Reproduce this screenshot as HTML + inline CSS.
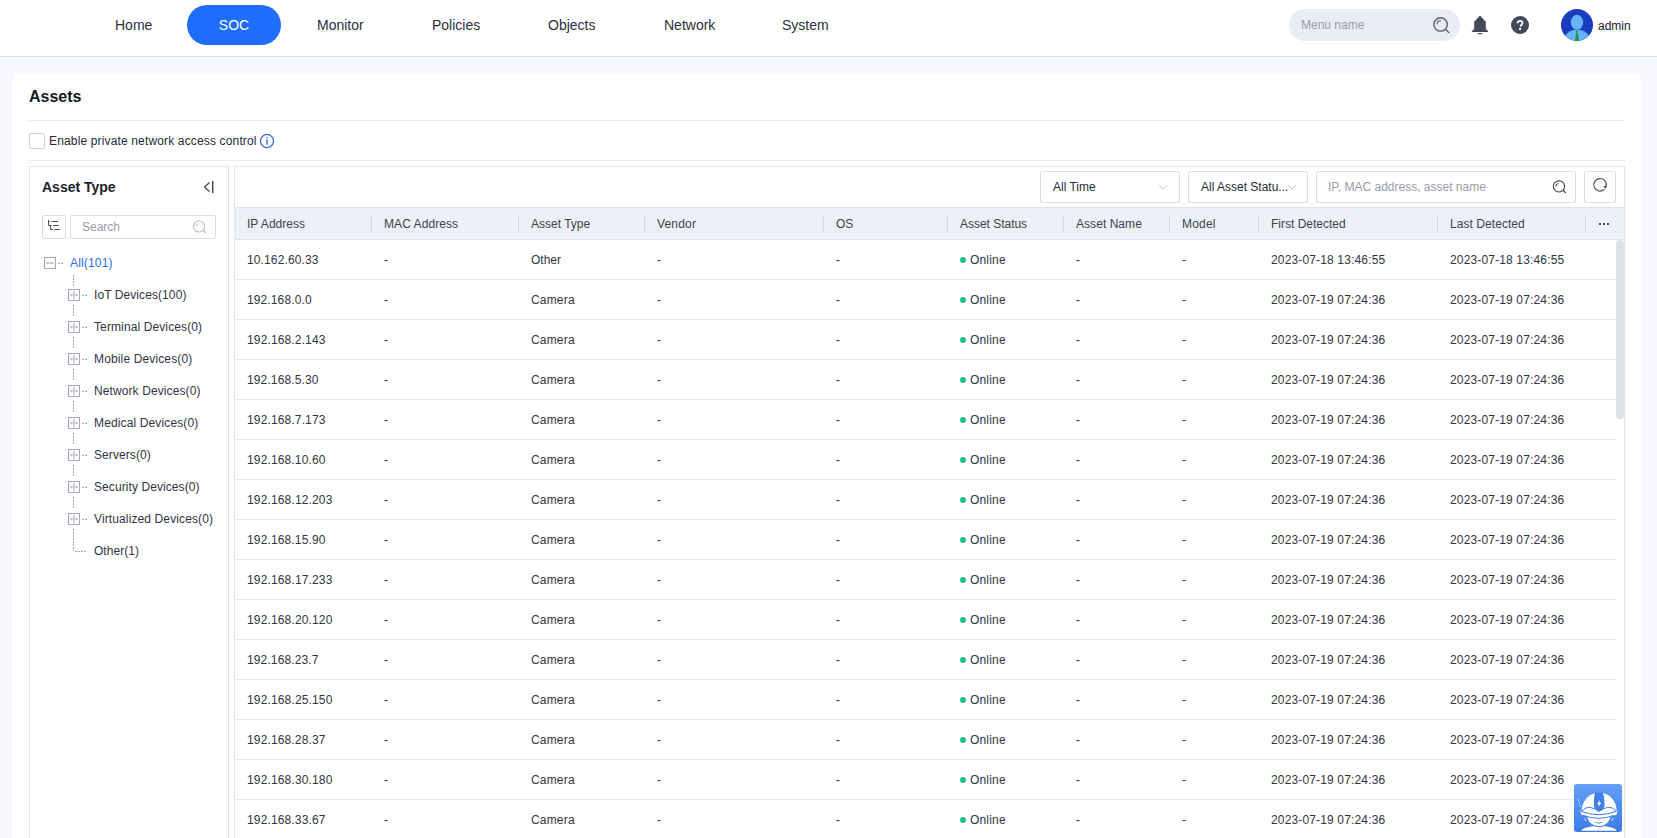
<!DOCTYPE html>
<html><head><meta charset="utf-8">
<style>
*{box-sizing:border-box;margin:0;padding:0}
html,body{width:1657px;height:838px;overflow:hidden}
body{background:#f7f8fc;font-family:"Liberation Sans",sans-serif;color:#1f2430;position:relative}
.abs{position:absolute}
#nav{position:absolute;left:0;top:0;width:1657px;height:57px;background:#fff;border-bottom:1px solid #dde1e8}
.ni{position:absolute;top:0;height:50px;line-height:50px;font-size:14px;color:#2b303b;white-space:nowrap}
#soc{position:absolute;left:187px;top:5px;width:94px;height:40px;border-radius:20px;background:#1f6dfd;color:#fff;font-size:14px;line-height:40px;text-align:center}
#msearch{position:absolute;left:1289px;top:9px;width:171px;height:32px;border-radius:16px;background:#e9ecf3}
#msearch span{position:absolute;left:12px;top:0;line-height:32px;font-size:12px;color:#979ca8}
#card{position:absolute;left:13px;top:73px;width:1628px;height:800px;background:#fff;border-radius:4px}
.hl{position:absolute;height:1px;background:#e8ebf0}
.txt{position:absolute;white-space:nowrap;font-size:12px;line-height:14px}
#lp{position:absolute;left:29px;top:166px;width:200px;height:700px;border:1px solid #dfe3ea;border-bottom:none}
#rp{position:absolute;left:234px;top:166px;width:1391px;height:700px;border:1px solid #dfe3ea;border-bottom:none}
.sel{position:absolute;top:171px;height:32px;border:1px solid #d9dde5;border-radius:2px;background:#fff;font-size:12px;line-height:30px;white-space:nowrap}
#thead{position:absolute;left:235px;top:207px;width:1389px;height:33px;background:#edf0f7;border-top:1px solid #dfe3ea;border-bottom:1px solid #dfe3ea}
.th{position:absolute;top:1px;line-height:31px;font-size:12px;color:#3d434e;white-space:nowrap}
.sep{position:absolute;top:8px;width:1px;height:16px;background:#d3d8e2}
.more{position:absolute;left:1364px;top:15px;width:12px;height:3px}
.more i{float:left;width:2px;height:2px;background:#4a505c;margin-right:2px}
.row{position:absolute;left:235px;width:1381px;height:40px;border-bottom:1px solid #e4e7ed}
.td{position:absolute;top:0;line-height:41px;font-size:12px;color:#30353f;white-space:nowrap}
.dot{display:inline-block;width:6px;height:6px;border-radius:3px;background:#1fc083;margin-right:4px;vertical-align:1px}
.tn{position:absolute;white-space:nowrap;font-size:12px;color:#30353f;line-height:14px}
.pb{position:absolute;width:12px;height:12px;border:1px solid #a2a8b3;background:#fff}
.pb:before{content:"";position:absolute;left:1px;top:4px;width:8px;height:2px;background:#c9cdd5}
.pb.plus:after{content:"";position:absolute;left:4px;top:1px;width:2px;height:8px;background:#c9cdd5}
.vd{position:absolute;width:1px;background:repeating-linear-gradient(to bottom,#a3a9b4 0 2px,transparent 2px 3px)}
.hd{position:absolute;height:1px;background:repeating-linear-gradient(to right,#a3a9b4 0 2px,transparent 2px 3px)}
#sb{position:absolute;left:1616px;top:240px;width:8px;height:179px;background:#dfe2ea;border-radius:4px}
</style></head><body>
<div id="nav">
  <div class="ni" style="left:115px">Home</div>
  <div id="soc">SOC</div>
  <div class="ni" style="left:317px">Monitor</div>
  <div class="ni" style="left:432px">Policies</div>
  <div class="ni" style="left:548px">Objects</div>
  <div class="ni" style="left:664px">Network</div>
  <div class="ni" style="left:782px">System</div>
  <div id="msearch"><span>Menu name</span>
    <svg class="abs" style="left:143px;top:7px" width="19" height="19" viewBox="0 0 19 19"><circle cx="8.6" cy="8.4" r="6.7" fill="none" stroke="#5c6270" stroke-width="1.4"/><path d="M13.4 13.2L17.3 16.9" stroke="#5c6270" stroke-width="1.4"/><path d="M4.9 8.4A4 4 0 0 1 8.8 4.7" fill="none" stroke="#5c6270" stroke-width="1.2"/></svg>
  </div>
  <svg class="abs" style="left:1471px;top:15px" width="18" height="20" viewBox="0 0 18 20"><path d="M9 0.6L3.2 6.8V14L0.8 16.2V17H17.2V16.2L14.8 14V6.8Z" fill="#434959"/><rect x="7" y="18" width="4" height="1.2" fill="#434959"/></svg>
  <svg class="abs" style="left:1511px;top:16px" width="18" height="18" viewBox="0 0 18 18"><circle cx="9" cy="9" r="9" fill="#434959"/><path d="M6.6 7.2C6.6 5.7 7.7 4.8 9.1 4.8C10.5 4.8 11.5 5.7 11.5 6.9C11.5 8.4 9.7 8.6 9.7 10.2V10.8" fill="none" stroke="#fff" stroke-width="1.8"/><rect x="8.1" y="12" width="2" height="2" fill="#fff"/></svg>
  <svg class="abs" style="left:1561px;top:9px" width="32" height="32" viewBox="0 0 32 32"><defs><clipPath id="av"><circle cx="16" cy="16" r="16"/></clipPath></defs><circle cx="16" cy="16" r="16" fill="#1a3dbd"/><g clip-path="url(#av)"><ellipse cx="16" cy="32.5" rx="13.5" ry="12" fill="#66b2fd"/><ellipse cx="16" cy="13.2" rx="6.2" ry="7.4" fill="#66b2fd"/><path d="M15.2 23.8H16.8L18 32H14Z" fill="#14a03a"/><ellipse cx="16" cy="22.6" rx="1.2" ry="1.1" fill="#14a03a"/></g></svg>
  <div class="abs" style="left:1598px;top:19px;font-size:12px;line-height:14px;color:#1a1a1a">admin</div>
</div>
<div id="card"></div>
<div class="txt" style="left:29px;top:88px;font-size:16px;line-height:18px;font-weight:bold;color:#14181f">Assets</div>
<div class="hl" style="left:29px;top:120px;width:1596px"></div>
<div class="abs" style="left:29px;top:133px;width:16px;height:16px;border:1px solid #cdd2da;border-radius:2px"></div>
<div class="txt" style="left:49px;top:134px;color:#262b36;letter-spacing:0.15px">Enable private network access control</div>
<svg class="abs" style="left:260px;top:134px" width="14" height="14" viewBox="0 0 14 14"><circle cx="7" cy="7" r="6.5" fill="none" stroke="#2055e5" stroke-width="1.05"/><rect x="6.1" y="3" width="1.8" height="1.2" fill="#6f90ee"/><rect x="6.1" y="5.2" width="1.8" height="5.6" fill="#6f90ee"/></svg>
<div class="hl" style="left:29px;top:160px;width:1596px"></div>
<div id="lp"></div>
<div class="abs" style="left:42px;top:179px;font-size:14px;line-height:16px;font-weight:bold;color:#1a1e27">Asset Type</div>
<svg class="abs" style="left:202px;top:180px" width="12" height="14" viewBox="0 0 12 14"><path d="M7.5 2.5L2.5 7L7.5 11.5" fill="none" stroke="#3c424e" stroke-width="1.2"/><rect x="10" y="1" width="1.4" height="12" fill="#3c424e"/></svg>
<div class="abs" style="left:42px;top:215px;width:24px;height:24px;border:1px solid #d9dde5;border-radius:2px"></div>
<svg class="abs" style="left:47px;top:220px" width="14" height="14" viewBox="0 0 14 14"><path d="M1.5 0V5.5H4.8M1.5 1.5H2.8M3.5 5.5V9.5H5.7M4.3 1.5H10.9M6.2 5.5H11.8M7.1 9.5H12.9" fill="none" stroke="#4a505c" stroke-width="1"/></svg>
<div class="abs" style="left:70px;top:215px;width:146px;height:24px;border:1px solid #d9dde5;border-radius:2px"></div>
<div class="txt" style="left:82px;top:220px;color:#979ca8">Search</div>
<svg class="abs" style="left:192px;top:219px" width="16" height="16" viewBox="0 0 16 16"><circle cx="7.1" cy="7.4" r="5.6" fill="none" stroke="#b8bdc6" stroke-width="1.1"/><path d="M11.1 11.3L14 14" stroke="#b8bdc6" stroke-width="1.1"/><path d="M3.7 7.6A3.4 3.4 0 0 1 6.9 4.6" fill="none" stroke="#b8bdc6" stroke-width="1"/></svg>
<div class="pb" style="left:44px;top:257px"></div>
<div class="hd" style="left:58px;top:263px;width:5px"></div>
<div class="tn" style="left:70px;top:256px;color:#2a6df4;letter-spacing:0.165px">All(101)</div>
<div class="vd" style="left:73px;top:275px;height:12px"></div>
<div class="pb plus" style="left:68px;top:289px"></div>
<div class="hd" style="left:82px;top:295px;width:5px"></div>
<div class="tn" style="left:94px;top:288px;letter-spacing:0.082px">IoT Devices(100)</div>
<div class="vd" style="left:73px;top:305px;height:12px"></div>
<div class="pb plus" style="left:68px;top:321px"></div>
<div class="hd" style="left:82px;top:327px;width:5px"></div>
<div class="tn" style="left:94px;top:320px;letter-spacing:0.111px">Terminal Devices(0)</div>
<div class="vd" style="left:73px;top:337px;height:12px"></div>
<div class="pb plus" style="left:68px;top:353px"></div>
<div class="hd" style="left:82px;top:359px;width:5px"></div>
<div class="tn" style="left:94px;top:352px;letter-spacing:0.14px">Mobile Devices(0)</div>
<div class="vd" style="left:73px;top:369px;height:12px"></div>
<div class="pb plus" style="left:68px;top:385px"></div>
<div class="hd" style="left:82px;top:391px;width:5px"></div>
<div class="tn" style="left:94px;top:384px;letter-spacing:0.102px">Network Devices(0)</div>
<div class="vd" style="left:73px;top:401px;height:12px"></div>
<div class="pb plus" style="left:68px;top:417px"></div>
<div class="hd" style="left:82px;top:423px;width:5px"></div>
<div class="tn" style="left:94px;top:416px;letter-spacing:0.132px">Medical Devices(0)</div>
<div class="vd" style="left:73px;top:433px;height:12px"></div>
<div class="pb plus" style="left:68px;top:449px"></div>
<div class="hd" style="left:82px;top:455px;width:5px"></div>
<div class="tn" style="left:94px;top:448px;letter-spacing:0.079px">Servers(0)</div>
<div class="vd" style="left:73px;top:465px;height:12px"></div>
<div class="pb plus" style="left:68px;top:481px"></div>
<div class="hd" style="left:82px;top:487px;width:5px"></div>
<div class="tn" style="left:94px;top:480px;letter-spacing:0.083px">Security Devices(0)</div>
<div class="vd" style="left:73px;top:497px;height:12px"></div>
<div class="pb plus" style="left:68px;top:513px"></div>
<div class="hd" style="left:82px;top:519px;width:5px"></div>
<div class="tn" style="left:94px;top:512px;letter-spacing:0.12px">Virtualized Devices(0)</div>
<div class="vd" style="left:73px;top:529px;height:22px"></div>
<div class="hd" style="left:75px;top:551px;width:11px"></div>
<div class="tn" style="left:94px;top:544px;letter-spacing:0.032px">Other(1)</div>
<div id="rp"></div>
<div class="sel" style="left:1040px;width:140px;padding-left:12px;color:#262b36">All Time</div>
<svg class="abs" style="left:1158px;top:184px" width="10" height="7" viewBox="0 0 10 7"><path d="M1 1.2L5 5.2L9 1.2" fill="none" stroke="#bcc1c9" stroke-width="1"/></svg>
<div class="sel" style="left:1188px;width:120px;padding-left:12px;color:#262b36">All Asset Statu...</div>
<svg class="abs" style="left:1287px;top:184px" width="10" height="7" viewBox="0 0 10 7"><path d="M1 1.2L5 5.2L9 1.2" fill="none" stroke="#bcc1c9" stroke-width="1"/></svg>
<div class="sel" style="left:1316px;width:260px;padding-left:11px;color:#979ca8">IP, MAC address, asset name</div>
<svg class="abs" style="left:1551px;top:179px" width="17" height="17" viewBox="0 0 17 17"><circle cx="8" cy="7.4" r="5.6" fill="none" stroke="#444a57" stroke-width="1.2"/><path d="M11.9 11.3L14.9 14" stroke="#444a57" stroke-width="1.2"/><path d="M4.7 7.4A3.5 3.5 0 0 1 7.6 4.5" fill="none" stroke="#444a57" stroke-width="1.1"/></svg>
<div class="sel" style="left:1584px;width:32px"></div>
<svg class="abs" style="left:1591px;top:176px" width="18" height="18" viewBox="0 0 18 18"><path d="M13.3 13.5A6.3 6.3 0 1 1 15.2 10.3" fill="none" stroke="#4a5160" stroke-width="1.2"/><path d="M12.2 10.2L16.2 9.4L14.6 13Z" fill="#4a5160"/></svg>
<div id="thead"><div class="th" style="left:12px;letter-spacing:0.025px">IP Address</div><div class="th" style="left:149px;letter-spacing:0.071px">MAC Address</div><div class="th" style="left:296px">Asset Type</div><div class="th" style="left:422px;letter-spacing:0.174px">Vendor</div><div class="th" style="left:601px;letter-spacing:-0.135px">OS</div><div class="th" style="left:725px;letter-spacing:-0.024px">Asset Status</div><div class="th" style="left:841px;letter-spacing:0.051px">Asset Name</div><div class="th" style="left:947px;letter-spacing:0.21px">Model</div><div class="th" style="left:1036px">First Detected</div><div class="th" style="left:1215px;letter-spacing:0.058px">Last Detected</div><div class="sep" style="left:136px"></div><div class="sep" style="left:283px"></div><div class="sep" style="left:409px"></div><div class="sep" style="left:588px"></div><div class="sep" style="left:712px"></div><div class="sep" style="left:828px"></div><div class="sep" style="left:934px"></div><div class="sep" style="left:1023px"></div><div class="sep" style="left:1202px"></div><div class="sep" style="left:1350px"></div><div class="more"><i></i><i></i><i></i></div></div>
<div class="row" style="top:240px"><div class="td" style="left:12px;letter-spacing:0.129px">10.162.60.33</div><div class="td" style="left:149px">-</div><div class="td" style="left:296px">Other</div><div class="td" style="left:422px">-</div><div class="td" style="left:601px">-</div><div class="td" style="left:725px;letter-spacing:0.175px"><span class="dot"></span>Online</div><div class="td" style="left:841px">-</div><div class="td" style="left:947px">-</div><div class="td" style="left:1036px;letter-spacing:0.15px">2023-07-18 13:46:55</div><div class="td" style="left:1215px;letter-spacing:0.15px">2023-07-18 13:46:55</div></div>
<div class="row" style="top:280px"><div class="td" style="left:12px;letter-spacing:0.117px">192.168.0.0</div><div class="td" style="left:149px">-</div><div class="td" style="left:296px;letter-spacing:0.176px">Camera</div><div class="td" style="left:422px">-</div><div class="td" style="left:601px">-</div><div class="td" style="left:725px;letter-spacing:0.175px"><span class="dot"></span>Online</div><div class="td" style="left:841px">-</div><div class="td" style="left:947px">-</div><div class="td" style="left:1036px;letter-spacing:0.15px">2023-07-19 07:24:36</div><div class="td" style="left:1215px;letter-spacing:0.15px">2023-07-19 07:24:36</div></div>
<div class="row" style="top:320px"><div class="td" style="left:12px;letter-spacing:0.139px">192.168.2.143</div><div class="td" style="left:149px">-</div><div class="td" style="left:296px;letter-spacing:0.176px">Camera</div><div class="td" style="left:422px">-</div><div class="td" style="left:601px">-</div><div class="td" style="left:725px;letter-spacing:0.175px"><span class="dot"></span>Online</div><div class="td" style="left:841px">-</div><div class="td" style="left:947px">-</div><div class="td" style="left:1036px;letter-spacing:0.15px">2023-07-19 07:24:36</div><div class="td" style="left:1215px;letter-spacing:0.15px">2023-07-19 07:24:36</div></div>
<div class="row" style="top:360px"><div class="td" style="left:12px;letter-spacing:0.129px">192.168.5.30</div><div class="td" style="left:149px">-</div><div class="td" style="left:296px;letter-spacing:0.176px">Camera</div><div class="td" style="left:422px">-</div><div class="td" style="left:601px">-</div><div class="td" style="left:725px;letter-spacing:0.175px"><span class="dot"></span>Online</div><div class="td" style="left:841px">-</div><div class="td" style="left:947px">-</div><div class="td" style="left:1036px;letter-spacing:0.15px">2023-07-19 07:24:36</div><div class="td" style="left:1215px;letter-spacing:0.15px">2023-07-19 07:24:36</div></div>
<div class="row" style="top:400px"><div class="td" style="left:12px;letter-spacing:0.139px">192.168.7.173</div><div class="td" style="left:149px">-</div><div class="td" style="left:296px;letter-spacing:0.176px">Camera</div><div class="td" style="left:422px">-</div><div class="td" style="left:601px">-</div><div class="td" style="left:725px;letter-spacing:0.175px"><span class="dot"></span>Online</div><div class="td" style="left:841px">-</div><div class="td" style="left:947px">-</div><div class="td" style="left:1036px;letter-spacing:0.15px">2023-07-19 07:24:36</div><div class="td" style="left:1215px;letter-spacing:0.15px">2023-07-19 07:24:36</div></div>
<div class="row" style="top:440px"><div class="td" style="left:12px;letter-spacing:0.139px">192.168.10.60</div><div class="td" style="left:149px">-</div><div class="td" style="left:296px;letter-spacing:0.176px">Camera</div><div class="td" style="left:422px">-</div><div class="td" style="left:601px">-</div><div class="td" style="left:725px;letter-spacing:0.175px"><span class="dot"></span>Online</div><div class="td" style="left:841px">-</div><div class="td" style="left:947px">-</div><div class="td" style="left:1036px;letter-spacing:0.15px">2023-07-19 07:24:36</div><div class="td" style="left:1215px;letter-spacing:0.15px">2023-07-19 07:24:36</div></div>
<div class="row" style="top:480px"><div class="td" style="left:12px;letter-spacing:0.148px">192.168.12.203</div><div class="td" style="left:149px">-</div><div class="td" style="left:296px;letter-spacing:0.176px">Camera</div><div class="td" style="left:422px">-</div><div class="td" style="left:601px">-</div><div class="td" style="left:725px;letter-spacing:0.175px"><span class="dot"></span>Online</div><div class="td" style="left:841px">-</div><div class="td" style="left:947px">-</div><div class="td" style="left:1036px;letter-spacing:0.15px">2023-07-19 07:24:36</div><div class="td" style="left:1215px;letter-spacing:0.15px">2023-07-19 07:24:36</div></div>
<div class="row" style="top:520px"><div class="td" style="left:12px;letter-spacing:0.139px">192.168.15.90</div><div class="td" style="left:149px">-</div><div class="td" style="left:296px;letter-spacing:0.176px">Camera</div><div class="td" style="left:422px">-</div><div class="td" style="left:601px">-</div><div class="td" style="left:725px;letter-spacing:0.175px"><span class="dot"></span>Online</div><div class="td" style="left:841px">-</div><div class="td" style="left:947px">-</div><div class="td" style="left:1036px;letter-spacing:0.15px">2023-07-19 07:24:36</div><div class="td" style="left:1215px;letter-spacing:0.15px">2023-07-19 07:24:36</div></div>
<div class="row" style="top:560px"><div class="td" style="left:12px;letter-spacing:0.148px">192.168.17.233</div><div class="td" style="left:149px">-</div><div class="td" style="left:296px;letter-spacing:0.176px">Camera</div><div class="td" style="left:422px">-</div><div class="td" style="left:601px">-</div><div class="td" style="left:725px;letter-spacing:0.175px"><span class="dot"></span>Online</div><div class="td" style="left:841px">-</div><div class="td" style="left:947px">-</div><div class="td" style="left:1036px;letter-spacing:0.15px">2023-07-19 07:24:36</div><div class="td" style="left:1215px;letter-spacing:0.15px">2023-07-19 07:24:36</div></div>
<div class="row" style="top:600px"><div class="td" style="left:12px;letter-spacing:0.148px">192.168.20.120</div><div class="td" style="left:149px">-</div><div class="td" style="left:296px;letter-spacing:0.176px">Camera</div><div class="td" style="left:422px">-</div><div class="td" style="left:601px">-</div><div class="td" style="left:725px;letter-spacing:0.175px"><span class="dot"></span>Online</div><div class="td" style="left:841px">-</div><div class="td" style="left:947px">-</div><div class="td" style="left:1036px;letter-spacing:0.15px">2023-07-19 07:24:36</div><div class="td" style="left:1215px;letter-spacing:0.15px">2023-07-19 07:24:36</div></div>
<div class="row" style="top:640px"><div class="td" style="left:12px;letter-spacing:0.129px">192.168.23.7</div><div class="td" style="left:149px">-</div><div class="td" style="left:296px;letter-spacing:0.176px">Camera</div><div class="td" style="left:422px">-</div><div class="td" style="left:601px">-</div><div class="td" style="left:725px;letter-spacing:0.175px"><span class="dot"></span>Online</div><div class="td" style="left:841px">-</div><div class="td" style="left:947px">-</div><div class="td" style="left:1036px;letter-spacing:0.15px">2023-07-19 07:24:36</div><div class="td" style="left:1215px;letter-spacing:0.15px">2023-07-19 07:24:36</div></div>
<div class="row" style="top:680px"><div class="td" style="left:12px;letter-spacing:0.148px">192.168.25.150</div><div class="td" style="left:149px">-</div><div class="td" style="left:296px;letter-spacing:0.176px">Camera</div><div class="td" style="left:422px">-</div><div class="td" style="left:601px">-</div><div class="td" style="left:725px;letter-spacing:0.175px"><span class="dot"></span>Online</div><div class="td" style="left:841px">-</div><div class="td" style="left:947px">-</div><div class="td" style="left:1036px;letter-spacing:0.15px">2023-07-19 07:24:36</div><div class="td" style="left:1215px;letter-spacing:0.15px">2023-07-19 07:24:36</div></div>
<div class="row" style="top:720px"><div class="td" style="left:12px;letter-spacing:0.139px">192.168.28.37</div><div class="td" style="left:149px">-</div><div class="td" style="left:296px;letter-spacing:0.176px">Camera</div><div class="td" style="left:422px">-</div><div class="td" style="left:601px">-</div><div class="td" style="left:725px;letter-spacing:0.175px"><span class="dot"></span>Online</div><div class="td" style="left:841px">-</div><div class="td" style="left:947px">-</div><div class="td" style="left:1036px;letter-spacing:0.15px">2023-07-19 07:24:36</div><div class="td" style="left:1215px;letter-spacing:0.15px">2023-07-19 07:24:36</div></div>
<div class="row" style="top:760px"><div class="td" style="left:12px;letter-spacing:0.148px">192.168.30.180</div><div class="td" style="left:149px">-</div><div class="td" style="left:296px;letter-spacing:0.176px">Camera</div><div class="td" style="left:422px">-</div><div class="td" style="left:601px">-</div><div class="td" style="left:725px;letter-spacing:0.175px"><span class="dot"></span>Online</div><div class="td" style="left:841px">-</div><div class="td" style="left:947px">-</div><div class="td" style="left:1036px;letter-spacing:0.15px">2023-07-19 07:24:36</div><div class="td" style="left:1215px;letter-spacing:0.15px">2023-07-19 07:24:36</div></div>
<div class="row" style="top:800px"><div class="td" style="left:12px;letter-spacing:0.139px">192.168.33.67</div><div class="td" style="left:149px">-</div><div class="td" style="left:296px;letter-spacing:0.176px">Camera</div><div class="td" style="left:422px">-</div><div class="td" style="left:601px">-</div><div class="td" style="left:725px;letter-spacing:0.175px"><span class="dot"></span>Online</div><div class="td" style="left:841px">-</div><div class="td" style="left:947px">-</div><div class="td" style="left:1036px;letter-spacing:0.15px">2023-07-19 07:24:36</div><div class="td" style="left:1215px;letter-spacing:0.15px">2023-07-19 07:24:36</div></div>
<div id="sb"></div>
<div class="abs" style="left:1574px;top:784px;width:48px;height:48px;border-radius:3px;background:linear-gradient(#62a0f7,#3b7be7);overflow:hidden">
<svg class="abs" style="left:0;top:0" width="48" height="48" viewBox="0 0 48 48"><defs><clipPath id="dc"><rect x="0" y="0" width="48" height="29"/></clipPath></defs><path d="M7.5 46.8A17.5 4.8 0 0 1 42.5 46.8Z" fill="#fff"/><circle cx="24.8" cy="30.4" r="12.4" fill="#fff" stroke="#3e7fe9" stroke-width="1"/><circle cx="25.2" cy="26" r="17.3" fill="#fff" clip-path="url(#dc)"/><path d="M21.1 8.6C20 13 19.6 19 20.1 22.5C20.7 25.8 22.8 27 25.2 27C27.6 27 29.7 25.8 30.3 22.5C30.8 19 30.4 13 28.8 8.6Z" fill="#3e7fe9"/><path d="M25.9 15.6L23.1 20.3H25.1L24.3 23.2L27.4 18.5H25.4Z" fill="#fff"/><path d="M5.7 26.2Q25 33.5 43.8 26.2L42.5 30.8Q25 38 7.5 30.8Z" fill="#fff"/><path d="M6.5 27.2Q25 34.2 42.8 27.2M9.2 31.3Q25 37.3 39.8 31.3M8 26.8Q12 22.5 16.5 23.4Q21.5 24.4 24.9 27.6Q28.4 24.4 33.5 23.4Q38 22.5 42.2 26.8" fill="none" stroke="#3e7fe9" stroke-width="1"/><path d="M21.8 38.2Q25.2 40.4 28.6 38.2" fill="none" stroke="#3e7fe9" stroke-width="0.9"/><path d="M4.2 15.3L7.2 24.2" stroke="#fff" stroke-width="0.9" stroke-dasharray="1.6 1.4"/><path d="M10.5 34L12 37M39 34L37.5 37" stroke="#fff" stroke-width="0.8"/></svg>
</div>
</body></html>
